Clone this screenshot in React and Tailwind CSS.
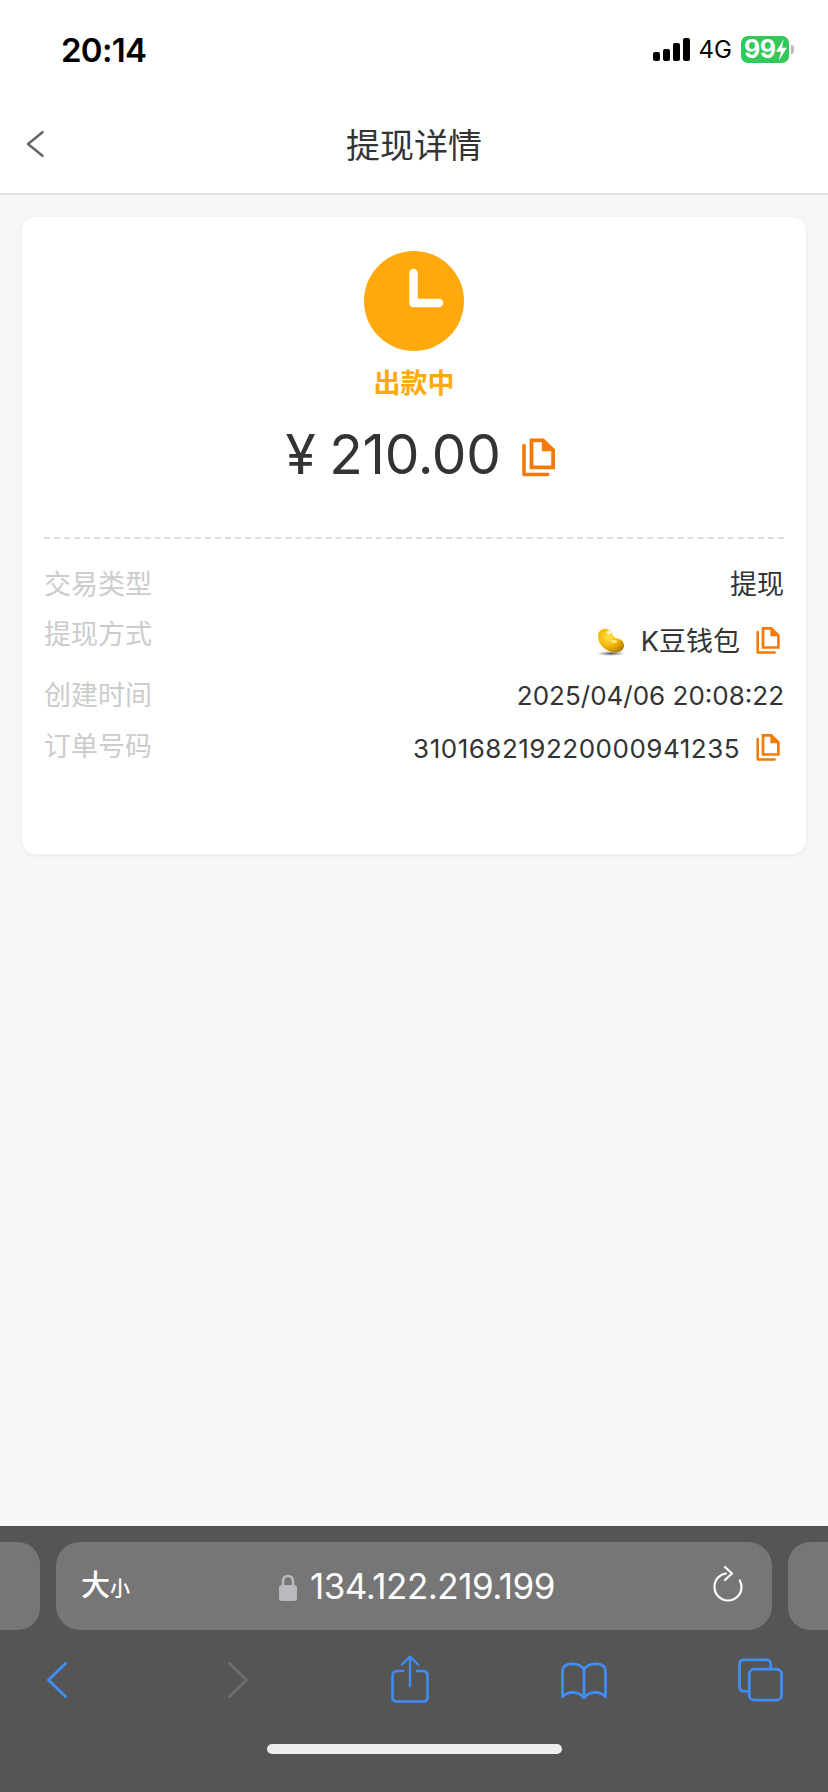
const FONT = { fontFamily: '"Inter", "Noto Sans CJK SC", sans-serif' };

function CopyIcon({ className }) {
  return (
    <svg viewBox="0 0 33.3 38.4" className={className} fill="none">
      <path fillRule="evenodd" fill="#f57a05" d="M7.7 0H22L33.3 11V31H7.7ZM11.5 3.8V27.2H29.5V13H20V3.8Z" />
      <path d="M2 7V36.4H26" stroke="#f57a05" strokeWidth="3.6" strokeLinecap="round" strokeLinejoin="round" />
    </svg>
  );
}

function Bean() {
  return (
    <svg viewBox="0 0 30 28" className="w-[30px] h-[28px]">
      <defs>
        <radialGradient id="beanBody" cx="40%" cy="35%" r="70%">
          <stop offset="0%" stopColor="#ffe04a" />
          <stop offset="55%" stopColor="#f3b808" />
          <stop offset="100%" stopColor="#b97f02" />
        </radialGradient>
        <radialGradient id="beanShadow" cx="50%" cy="50%" r="50%">
          <stop offset="0%" stopColor="#444" />
          <stop offset="100%" stopColor="#999" stopOpacity="0" />
        </radialGradient>
      </defs>
      <ellipse cx="15" cy="25.5" rx="15" ry="2.6" fill="url(#beanShadow)" />
      <path
        fill="url(#beanBody)"
        d="M2 8C2 3.5 5.5 0.8 9.5 0.8C14 0.8 15.5 4 17 7.5C18 9.5 20 10 23 11C26.5 12.2 28 14.500 28 17.500C28 21.500 24.500 24.500 20 24.500C11 24.500 2 17 2 8Z"
      />
      <ellipse cx="13" cy="4.500" rx="2.400" ry="2" fill="#fff6c0" />
      <ellipse cx="18" cy="13.500" rx="3" ry="1.500" fill="#ffe680" />
    </svg>
  );
}

function StatusBar() {
  return (
    <div className="h-[96px] pl-[61px] pr-[34px] pt-[30px] flex justify-between items-start bg-white">
      <span className="text-[33px] leading-[40px] font-semibold text-black tracking-[-0.7px]">20:14</span>
      <div className="flex items-center pt-[6px] h-[33px]">
        <div className="flex items-end gap-[3px] h-[23px]">
          <span className="w-[7px] h-[9px] rounded-[2px] bg-black" />
          <span className="w-[7px] h-[12px] rounded-[2px] bg-black" />
          <span className="w-[7px] h-[18px] rounded-[2px] bg-black" />
          <span className="w-[7px] h-[23px] rounded-[2px] bg-black" />
        </div>
        <span className="ml-[9px] text-[24px] leading-none text-black">4G</span>
        <div className="ml-[9px] w-[48px] h-[27px] rounded-[7px] bg-[#34c759] flex items-center pl-[3px] text-white font-bold text-[25px] leading-none tracking-[-0.5px]">
          99
          <svg viewBox="0 0 12 20" className="w-[13px] h-[22px]">
            <path d="M8 0L1 11.500H5.500L3.500 20L11 8H6.500Z" fill="#fff" />
          </svg>
        </div>
        <span className="ml-[2px] w-[3px] h-[9px] rounded-r-[3px] bg-[#bbbbbb]" />
      </div>
    </div>
  );
}

function NavBar() {
  return (
    <div className="relative h-[99px] bg-white border-b-2 border-[#e0e0e0] flex items-start justify-center pt-[26px]">
      <svg viewBox="0 0 18 26" className="absolute left-[26px] top-[35px] w-[18px] h-[26px]" fill="none">
        <path d="M16.500 1.200L2 13L16.500 24.800" stroke="#666" strokeWidth="2.500" strokeLinecap="round" strokeLinejoin="round" />
      </svg>
      <span className="text-[34px] leading-[48px] text-[#333]">提现详情</span>
    </div>
  );
}

function DetailCard() {
  return (
    <div className="h-[637px] rounded-[14px] bg-white shadow-[0_1px_6px_rgba(0,0,0,0.05)] px-[22px] pt-[34px]">
      <div className="flex flex-col items-center">
        <div className="w-[100px] h-[100px] rounded-full bg-[#ffa90c] flex items-center justify-center">
          <svg viewBox="0 0 100 100" className="w-[100px] h-[100px]" fill="none">
            <path d="M49.500 22V52H75" stroke="#fff" strokeWidth="8.500" strokeLinecap="round" strokeLinejoin="round" />
          </svg>
        </div>
        <div className="mt-[15px] text-[27px] leading-[36px] font-semibold text-[#ffa90c]">出款中</div>
        <div className="mt-[18px] ml-[12px] flex items-center h-[68px]">
          <span className="text-[55px] leading-[68px] text-[#333] tracking-[-0.3px]">
            ¥<span className="ml-[14px]">210.00</span>
          </span>
          <CopyIcon className="ml-[21px] w-[33px] h-[39px] mt-[7px]" />
        </div>
      </div>
      <div className="mt-[49px] border-t-2 border-dashed border-[#dddddd]" />
      <div className="mt-[29px] text-[27px] leading-[34px]">
        <div className="flex justify-between items-start">
          <span className="text-[#cccccc]">交易类型</span>
          <span className="text-[#333]">提现</span>
        </div>
        <div className="mt-[16px] h-[40px] flex justify-between items-start">
          <span className="text-[#cccccc]">提现方式</span>
          <div className="mt-[7px] h-[34px] flex items-center text-[#333]">
            <Bean />
            <span className="ml-[15px]">K豆钱包</span>
            <CopyIcon className="ml-[16px] mr-[4px] w-[24px] h-[27px] -mt-[4px]" />
          </div>
        </div>
        <div className="mt-[21px] flex justify-between items-start">
          <span className="text-[#cccccc]">创建时间</span>
          <span className="text-[#333] text-[26px]">2025/04/06 20:08:22</span>
        </div>
        <div className="mt-[17px] flex justify-between items-start">
          <span className="text-[#cccccc]">订单号码</span>
          <div className="mt-[2px] h-[34px] flex items-center text-[#333] text-[26px]">
            <span className="tracking-[0.5px]">310168219220000941235</span>
            <CopyIcon className="ml-[16px] mr-[4px] w-[24px] h-[27px] -mt-[3px]" />
          </div>
        </div>
      </div>
    </div>
  );
}

function UrlBar() {
  return (
    <div className="mt-[16px] h-[88px] flex gap-[16px] overflow-hidden">
      <div className="w-[40px] shrink-0 rounded-r-[22px] bg-[#767676]" />
      <div className="flex-1 rounded-[24px] bg-[#767676] relative flex items-center justify-center pl-[6px]">
        <span className="absolute left-[25px] top-[29px] text-white leading-none font-medium">
          <span className="text-[29px]">大</span>
          <span className="text-[20px]">小</span>
        </span>
        <svg viewBox="0 0 18 27" className="w-[18px] h-[27px] mt-[2px]" fill="none">
          <path d="M4 12V7.500C4 4 6 2 9 2C12 2 14 4 14 7.500V12" stroke="#b9b9be" strokeWidth="2.400" />
          <rect x="0" y="11" width="18" height="16" rx="3" fill="#b9b9be" />
        </svg>
        <span className="ml-[13px] text-[35px] leading-none text-white tracking-[-0.5px]">134.122.219.199</span>
        <svg viewBox="0 0 30 36" className="absolute right-[29px] top-[24px] w-[30px] h-[36px]" fill="none">
          <path
            d="M13 7.500C6.500 8.500 1.500 13.500 1.500 21C1.500 28.500 7.500 34.500 15 34.500C22.500 34.500 28.500 28.500 28.500 21C28.500 18.500 27.800 16.500 26.800 14.500"
            stroke="#fff"
            strokeWidth="2.200"
            strokeLinecap="round"
          />
          <path d="M12 1L19 7.500L12 14" stroke="#fff" strokeWidth="2.200" strokeLinecap="round" strokeLinejoin="round" />
        </svg>
      </div>
      <div className="w-[40px] shrink-0 rounded-l-[22px] bg-[#767676]" />
    </div>
  );
}

function Toolbar() {
  const blue = "#3f8ef5";
  return (
    <div className="mt-[25px] h-[48px] pl-[34px] pr-[45px] flex justify-between items-start">
      <div className="w-[46px] flex justify-center pt-[7px]">
        <svg viewBox="0 0 20 36" className="w-[20px] h-[36px]" fill="none">
          <path d="M18.500 1.500L1.500 18L18.500 34.500" stroke={blue} strokeWidth="3" strokeLinecap="round" strokeLinejoin="round" />
        </svg>
      </div>
      <div className="w-[46px] flex justify-center pt-[7px] pl-[10px]">
        <svg viewBox="0 0 20 36" className="w-[20px] h-[36px]" fill="none">
          <path d="M1.500 1.500L18.500 18L1.500 34.500" stroke="#6e6e6e" strokeWidth="3" strokeLinecap="round" strokeLinejoin="round" />
        </svg>
      </div>
      <div className="w-[46px] flex justify-center pl-[2px]">
        <svg viewBox="0 0 38 48" className="w-[38px] h-[48px]" fill="none">
          <path d="M12 16H6C3.200 16 1.500 17.700 1.500 20.500V42C1.500 44.800 3.200 46.500 6 46.500H32C34.800 46.500 36.500 44.800 36.500 42V20.500C36.500 17.700 34.800 16 32 16H26" stroke={blue} strokeWidth="2.600" strokeLinecap="round" />
          <path d="M19 2V31M11 9.500L19 1.500L27 9.500" stroke={blue} strokeWidth="2.400" strokeLinecap="round" strokeLinejoin="round" />
        </svg>
      </div>
      <div className="w-[46px] flex justify-center pt-[7px]">
        <svg viewBox="0 0 47 38" className="w-[47px] h-[38px]" fill="none">
          <path
            d="M23.500 7C21 3 17 1.500 11.500 1.500C6 1.500 1.500 3.500 1.500 9V35C5 31.500 8 30.500 12 30.500C17 30.500 21 32.500 23.500 36.500C26 32.500 30 30.500 35 30.500C39 30.500 42 31.500 45.500 35V9C45.500 3.500 41 1.500 35.500 1.500C30 1.500 26 3 23.500 7ZM23.500 7V36"
            stroke={blue}
            strokeWidth="2.800"
            strokeLinejoin="round"
          />
        </svg>
      </div>
      <div className="w-[46px] flex justify-center pt-[3px]">
        <svg viewBox="0 0 46 44" className="w-[46px] h-[44px] ml-[1px]" fill="none">
          <path d="M10 33.500H6C3 33.500 1.500 32 1.500 29V6C1.500 3 3 1.500 6 1.500H29C32 1.500 33.500 3 33.500 6V10" stroke={blue} strokeWidth="2.800" strokeLinecap="round" />
          <rect x="11.500" y="11" width="33" height="31.500" rx="5" stroke={blue} strokeWidth="2.800" />
        </svg>
      </div>
    </div>
  );
}

export default function App() {
  return (
    <div className="w-[828px] h-[1792px] flex flex-col bg-[#f7f7f7] overflow-hidden" style={FONT}>
      <StatusBar />
      <NavBar />
      <main className="flex-1 px-[22px] pt-[22px]">
        <DetailCard />
      </main>
      <footer className="h-[266px] bg-[#555555] flex flex-col">
        <UrlBar />
        <Toolbar />
        <div className="mt-[41px] mx-auto w-[295px] h-[10px] rounded-full bg-[#eeeeee]" />
      </footer>
    </div>
  );
}
